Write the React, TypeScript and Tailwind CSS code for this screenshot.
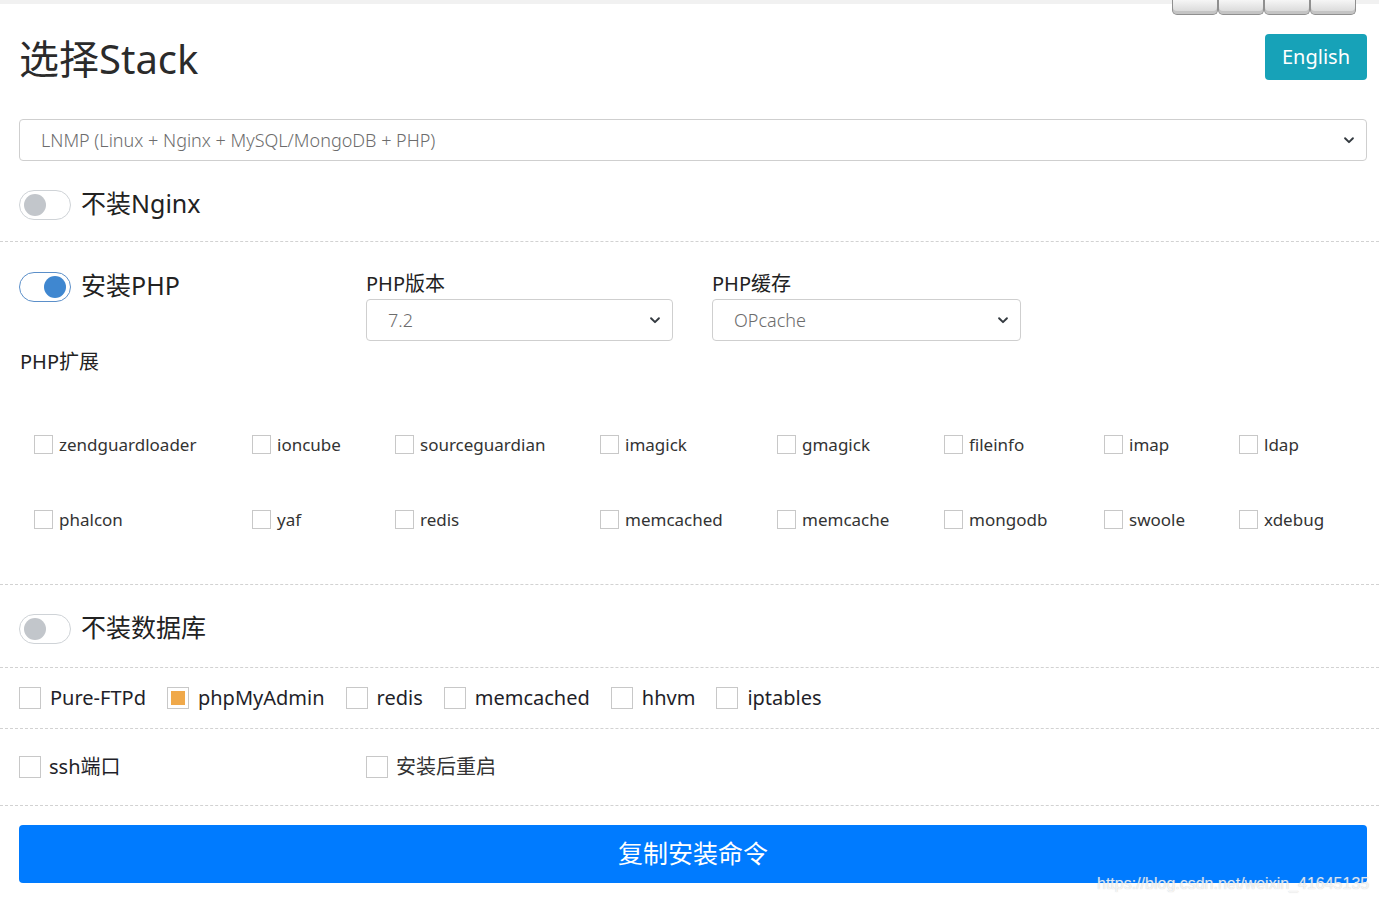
import { useState } from 'react';

const extensions = [
  ['zendguardloader', 'ioncube', 'sourceguardian', 'imagick', 'gmagick', 'fileinfo', 'imap', 'ldap'],
  ['phalcon', 'yaf', 'redis', 'memcached', 'memcache', 'mongodb', 'swoole', 'xdebug'],
];

const extras = ['Pure-FTPd', 'phpMyAdmin', 'redis', 'memcached', 'hhvm', 'iptables'];

function Chevron() {
  return (
    <svg width="14" height="14" viewBox="0 0 16 16" fill="none" stroke="#343a40" strokeWidth="2.2" strokeLinecap="round" strokeLinejoin="round">
      <path d="M3.5 6l4.5 4.5L12.5 6" />
    </svg>
  );
}

function FakeSelect({ value, className }: { value: string; className?: string }) {
  return (
    <div className={`flex h-[42px] items-center justify-between rounded-[4px] border border-[#cfcfcf] bg-white pl-[21px] pr-[10px] ${className ?? ''}`}>
      <span className="text-[18px] font-light text-[#6c6c6c]">{value}</span>
      <Chevron />
    </div>
  );
}

function Toggle({ on, onClick }: { on: boolean; onClick: () => void }) {
  return (
    <button
      onClick={onClick}
      className={`flex h-[30px] w-[52px] shrink-0 items-center rounded-full border bg-white px-[4px] ${
        on ? 'justify-end border-[#5b8fc9]' : 'justify-start border-[#cfd3d7]'
      }`}
    >
      <span className={`h-[22px] w-[22px] rounded-full ${on ? 'bg-[#3f87d0]' : 'bg-[#c2c6cb]'}`} />
    </button>
  );
}

function Box({ checked, size }: { checked?: boolean; size: 'sm' | 'lg' }) {
  return (
    <span
      className={`flex shrink-0 items-center justify-center border border-[#c8c8c8] bg-white ${
        size === 'lg' ? 'h-[22px] w-[22px]' : 'h-[19px] w-[19px]'
      }`}
    >
      {checked && <span className="h-[14px] w-[14px] bg-[#f0a94a]" />}
    </span>
  );
}

export default function App() {
  const [noNginx, setNoNginx] = useState(false);
  const [php, setPhp] = useState(true);
  const [noDb, setNoDb] = useState(false);

  return (
    <div className="relative h-[903px] overflow-hidden bg-white font-['Noto_Sans','Noto_Sans_CJK_SC',sans-serif] text-[#333]">
      <div className="h-[4px] w-full bg-[#f1f1f1]" />
      <div className="absolute left-[1172px] top-0 flex">
        {[0, 1, 2, 3].map((k) => (
          <div key={k} className="h-[15px] w-[46px] rounded-b-[5px] border border-t-0 border-[#8f8f8f] bg-gradient-to-b from-[#f6f6f6] to-[#d4d4d4] shadow-[inset_0_-3px_0_#c4c4c4]" />
        ))}
      </div>

      {/* stack */}
      <div className="border-b border-dashed border-[#d2d2d2] pb-[21px] pl-[19px] pr-[12px]">
        <div className="flex items-start justify-between pt-[26px]">
          <h1 className="text-[40px] leading-[58px] text-[#2b2b2b]">选择Stack</h1>
          <button className="mt-[4px] h-[46px] rounded-[4px] bg-[#17a2b8] px-[17px] text-[20px] text-white">English</button>
        </div>
        <FakeSelect value="LNMP (Linux + Nginx + MySQL/MongoDB + PHP)" className="mt-[31px]" />
        <div className="mt-[29px] flex items-center gap-[10px]">
          <Toggle on={noNginx} onClick={() => setNoNginx(!noNginx)} />
          <span className="-mt-[4px] text-[25px] leading-[30px] text-[#222]">不装Nginx</span>
        </div>
      </div>

      {/* php */}
      <div className="border-b border-dashed border-[#d2d2d2] pb-[27px] pl-[19px] pr-[12px] pt-[28px]">
        <div className="flex items-start">
          <div className="flex w-[347px] items-center gap-[10px] pt-[2px]">
            <Toggle on={php} onClick={() => setPhp(!php)} />
            <span className="-mt-[4px] text-[25px] leading-[30px] text-[#222]">安装PHP</span>
          </div>
          <div className="w-[307px]">
            <div className="mb-[2px] text-[20px] leading-[27px] text-[#222]">PHP版本</div>
            <FakeSelect value="7.2" />
          </div>
          <div className="ml-[39px] w-[309px]">
            <div className="mb-[2px] text-[20px] leading-[27px] text-[#222]">PHP缓存</div>
            <FakeSelect value="OPcache" />
          </div>
        </div>
        <div className="mt-[7px] pl-[1px] text-[20px] leading-[27px] text-[#222]">PHP扩展</div>
        <div className="mt-[32px] grid grid-cols-[218px_143px_205px_177px_167px_160px_135px_1fr] pl-[15px]">
          {extensions.flat().map((e, i) => (
            <label key={i} className="flex h-[75px] items-center gap-[6px] text-[17px] text-[#333]">
              <Box size="sm" />
              {e}
            </label>
          ))}
        </div>
      </div>

      {/* database */}
      <div className="border-b border-dashed border-[#d2d2d2] pb-[23px] pl-[19px] pr-[12px] pt-[29px]">
        <div className="flex items-center gap-[10px]">
          <Toggle on={noDb} onClick={() => setNoDb(!noDb)} />
          <span className="-mt-[4px] text-[25px] leading-[30px] text-[#222]">不装数据库</span>
        </div>
      </div>

      <div className="flex h-[61px] items-center gap-[21px] border-b border-dashed border-[#d2d2d2] pl-[19px] pr-[12px]">
        {extras.map((x) => (
          <label key={x} className="flex items-center gap-[9px] text-[20px] text-[#1f1f2a]">
            <Box size="lg" checked={x === 'phpMyAdmin'} />
            {x}
          </label>
        ))}
      </div>

      <div className="flex h-[77px] items-center border-b border-dashed border-[#d2d2d2] pl-[19px] pr-[12px]">
        <label className="flex w-[347px] items-center gap-[8px] text-[20px] text-[#1f1f2a]">
          <Box size="lg" />
          ssh端口
        </label>
        <label className="flex items-center gap-[8px] text-[20px] text-[#333]">
          <Box size="lg" />
          安装后重启
        </label>
      </div>

      <div className="pl-[19px] pr-[12px] pt-[19px]">
        <button className="h-[58px] w-full rounded-[4px] bg-[#007bff] text-[25px] text-white">复制安装命令</button>
      </div>

      <div className="absolute left-[1097px] top-[872px] font-['Liberation_Sans',sans-serif] text-[16px] text-white/80 [text-shadow:0_0_1px_rgba(150,150,150,0.6)]">
        https://blog.csdn.net/weixin_41645135
      </div>
    </div>
  );
}
